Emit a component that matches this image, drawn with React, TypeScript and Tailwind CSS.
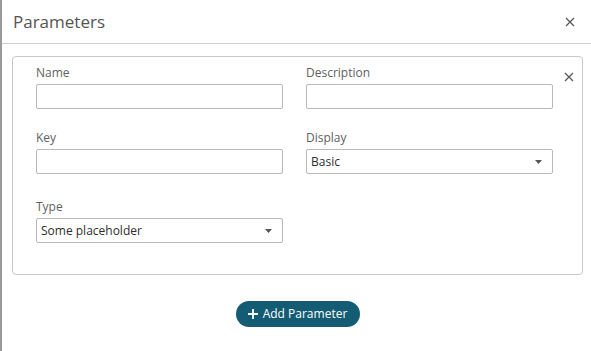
import React from "react";

function Field({ label, value, select }: { label: string; value?: string; select?: boolean }) {
  return (
    <div className="flex flex-col">
      <label className="text-[12px] leading-[17px] text-[#5f5f5f] mb-[3px]">{label}</label>
      <div className="h-[25px] border border-[#b9b9b9] rounded-[2px] bg-white flex items-center justify-between pl-[4px] pr-[10px]">
        <span className="text-[12px] text-[#2e2e2e]">{value ?? ""}</span>
        {select && (
          <svg width="7" height="4" viewBox="0 0 7 4">
            <path d="M0 0h7L3.5 4z" fill="#555" />
          </svg>
        )}
      </div>
    </div>
  );
}

function CloseIcon({ size = 10 }: { size?: number }) {
  return (
    <svg width={size} height={size} viewBox="0 0 10 10">
      <path d="M1 1l8 8M9 1l-8 8" stroke="#555" strokeWidth="1.2" />
    </svg>
  );
}

export default function App() {
  return (
    <div
      className="w-[591px] h-[351px] bg-white border-l-2 border-[#9a9a9a] flex flex-col"
      style={{ fontFamily: '"Open Sans", sans-serif' }}
    >
      <div className="h-[44px] border-b border-[#cfcfcf] flex items-center justify-between pl-[11px] pr-[16px] shrink-0">
        <span className="text-[17px] text-[#555]">Parameters</span>
        <CloseIcon />
      </div>
      <div className="pl-[10px] pr-[8px] pt-[12px]">
        <div className="relative border border-[#c8c8c8] rounded-[4px] pl-[23px] pr-[29px] pt-[7px] pb-[31px]">
          <div className="absolute right-[8px] top-[15px]">
            <CloseIcon />
          </div>
          <div className="grid grid-cols-2 gap-x-[23px]">
            <Field label="Name" />
            <Field label="Description" />
          </div>
          <div className="grid grid-cols-2 gap-x-[23px] mt-[20px]">
            <Field label="Key" />
            <Field label="Display" value="Basic" select />
          </div>
          <div className="grid grid-cols-2 gap-x-[23px] mt-[24px]">
            <Field label="Type" value="Some placeholder" select />
          </div>
        </div>
      </div>
      <div className="flex justify-center pt-[26px] pl-[2px]">
        <button className="h-[26px] w-[124px] rounded-full bg-[#135c74] text-white text-[12px] font-medium flex items-center justify-center gap-[5px]">
          <svg width="10" height="10" viewBox="0 0 10 10">
            <path d="M5 0v10M0 5h10" stroke="white" strokeWidth="1.8" />
          </svg>
          <span>Add Parameter</span>
        </button>
      </div>
    </div>
  );
}
